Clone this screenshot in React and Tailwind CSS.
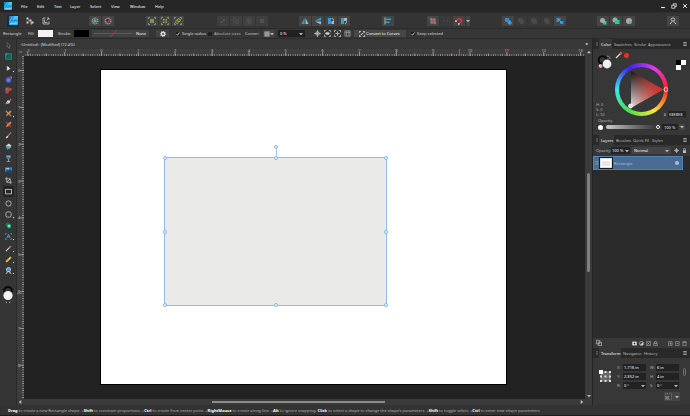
import { useState } from "react";

const MENUS = [
  ["File", "w-4"],
  ["Edit", "w-[17px]"],
  ["Text", "w-4"],
  ["Layer", "w-5"],
  ["Select", "w-[21px]"],
  ["View", "w-[19px]"],
  ["Window", "w-[25px]"],
  ["Help", "w-4"],
];

const UNIT = 36.85;

function Icon({ children, size = "size-2" }) {
  return (
    <svg viewBox="0 0 16 16" fill="none" aria-hidden="true" className={`${size} shrink-0`}>
      {children}
    </svg>
  );
}

function Logo({ size }) {
  return (
    <Icon size={size}>
      <rect width="16" height="16" rx="1.500" fill="#2fb4f7" />
      <path d="M0 0h6L0 9z" fill="#1583cf" />
      <path d="M9 0h7v5L5 8z" fill="#4cc6ff" />
      <path d="M1 13L9 1M4 8h12M7 12L12 5" stroke="#1371b5" strokeWidth="1" />
      <path d="M2 13h12" stroke="#a5e6ff" strokeWidth="1.400" />
    </Icon>
  );
}

function Arrow({ up, right }) {
  return (
    <svg viewBox="0 0 6 6" aria-hidden="true" className="size-1 shrink-0" fill="#bbb">
      <path d={up ? "M0 5h6L3 1z" : right ? "M1 0v6l4-3z" : "M0 1.5h6L3 5z"} />
    </svg>
  );
}

/* ---------- toolbar ---------- */

const BOOL_OFF = <path d="M3 3h7v7H3zM6 6h7v7H6z" fill="#4a4a4a" stroke="#525252" />;

const GROUPS = [
  {
    ml: "ml-[37px]",
    items: [
      ["Defaults", <><circle cx="8" cy="8" r="5.500" stroke="#999" strokeWidth="3" strokeDasharray="2.500 1.200" /><circle cx="8" cy="8" r="3.500" fill="#2a8f72" /><path d="M5 8h6M8 5v6" stroke="#b5d8cc" /></>],
      ["Revert defaults", <><circle cx="8" cy="8" r="5.500" stroke="#999" strokeWidth="3" strokeDasharray="2.500 1.200" /><circle cx="8" cy="8" r="4" fill="#423030" /><path d="M5 8l2.500 3L12 4" stroke="#dc3f3f" strokeWidth="2" /></>],
    ],
  },
  {
    ml: "ml-8",
    items: [
      ["Group", <><path d="M1 4V1h3M12 1h3v3M15 12v3h-3M4 15H1v-3" stroke="#a0a0a0" strokeWidth="1.500" /><rect x="4" y="4" width="8" height="8" fill="#6e9a4a" /></>],
      ["Ungroup", <><path d="M1 4V1h3M12 1h3v3M15 12v3h-3M4 15H1v-3" stroke="#a0a0a0" strokeWidth="1.500" /><path d="M4 4h3v3H4zM9 4h3v3H9zM4 9h3v3H4zM9 9h3v3H9z" fill="#a0a84a" /></>],
      ["Edit group", <><path d="M1 4V1h3M15 12v3h-3M4 15H1v-3M12 1h3v3" stroke="#a0a0a0" strokeWidth="1.500" /><circle cx="9.500" cy="6.500" r="3" stroke="#a6b443" strokeWidth="2" /><circle cx="6" cy="10" r="3" stroke="#7f9b3e" strokeWidth="2" /></>],
    ],
  },
  {
    ml: "ml-[33px]",
    dim: true,
    items: [
      ["Move back", <path d="M4 12l8-8M4 8l4 4M8 4l4 4" stroke="#525252" strokeWidth="2" />],
      ["Back one", <path d="M3 3h7v7H3zM7 7h6v6H7z" stroke="#4f4f4f" strokeWidth="1.500" />],
      ["Forward one", BOOL_OFF],
      ["Move front", <path d="M4 4h8v8H4z" fill="#505050" />],
    ],
  },
  {
    ml: "ml-[31px]",
    items: [
      ["Flip horizontal", <><path d="M7 2v12H1z" fill="#2b9fe0" /><path d="M9 2v12h6z" fill="#b5b5b5" /></>],
      ["Flip vertical", <><path d="M14 1v6H2z" fill="#2b9fe0" /><path d="M2 9h12v6z" fill="#b5b5b5" /></>],
      ["Rotate left", <><path d="M2 2h6v12H2z" fill="#2b9fe0" /><path d="M9 8h5v6H9z" fill="#b5b5b5" /><path d="M9 3c3 0 4 1 4 4" stroke="#ddd" strokeWidth="1.500" /></>],
      ["Rotate right", <><path d="M2 2h12v6H2z" fill="#b5b5b5" /><path d="M2 2h6v12H2z" fill="#2b9fe0" /><path d="M10 13c3 0 3-1 3-4" stroke="#ddd" strokeWidth="1.500" /></>],
    ],
  },
  {
    ml: "ml-8",
    items: [["Alignment", <><path d="M2 1v14" stroke="#ddd" strokeWidth="1.500" /><path d="M4 3h10v3H4zM4 9h7v3H4z" fill="#2b9fe0" /></>]],
  },
  {
    ml: "ml-[33px]",
    items: [
      ["Force pixel alignment", <><rect x="3" y="3" width="10" height="10" fill="#666" /><path d="M1 4h12M4 1v12M12 4v11M4 12h11" stroke="#aaa" /><rect x="6" y="6" width="4" height="4" fill="#e84343" /></>],
      ["Move by whole pixels", <path d="M2 6h4v4H2zM9 6h4v4H9z" fill="#444" />, true],
      ["Snapping", <g transform="rotate(45 8 8)"><path d="M4 12V7a4 4 0 0 1 8 0v5" stroke="#dc3346" strokeWidth="3" /><path d="M4 11v3M12 11v3" stroke="#ddd" strokeWidth="3" /></g>],
    ],
    drop: true,
  },
  {
    ml: "ml-8",
    items: [
      ["Add", <><path d="M2 2h8v4h3v7H7v-3H2z" fill="#2b8fd8" /><circle cx="12" cy="12" r="2.500" stroke="#72c2ff" strokeWidth="1.500" /></>],
      ["Subtract", BOOL_OFF, true],
      ["Intersect", BOOL_OFF, true],
      ["Xor", BOOL_OFF, true],
      ["Divide", <><path d="M1 2h8v5H6v3H1z" fill="#2b8fd8" /><path d="M8 8h7v6H8z" fill="#2b8fd8" /><path d="M4 4l8 8" stroke="#8bd0ff" /></>],
    ],
  },
  {
    ml: "ml-[31px]",
    items: [
      ["Insert behind", <><path d="M8 8h7v7H8z" fill="#20cfa0" /><circle cx="7" cy="7" r="5" fill="#a9a9a9" /></>],
      ["Insert on top", <><circle cx="6" cy="6" r="5" fill="#a9a9a9" /><path d="M6 6h9v8H6z" fill="#20cfa0" /></>],
      ["Insert inside", <><circle cx="8" cy="8" r="6" fill="#a9a9a9" /><path d="M8 8h6c0 4-3 6-6 6z" fill="#20cfa0" /></>],
    ],
  },
  {
    ml: "ml-8",
    items: [["Account", <><circle cx="8" cy="5" r="3.300" stroke="#ccc" strokeWidth="1.800" /><path d="M2 14l4-5M14 14l-4-5" stroke="#ccc" strokeWidth="2" /></>]],
  },
];

function ToolbarGroup({ group }) {
  return (
    <div className={`flex gap-px ${group.ml}`}>
      {group.items.map(([label, art, dim]) => (
        <button
          key={label}
          aria-label={label}
          className={`flex h-2.5 w-3 items-center justify-center ${dim ? "bg-[#393939]" : group.dim ? "bg-[#3f3f3f]" : "bg-[#454545]"}`}
        >
          <Icon>{art}</Icon>
        </button>
      ))}
      {group.drop && (
        <button aria-label="Snapping options" className="flex h-2.5 w-1 items-center justify-center bg-[#454545]">
          <Arrow />
        </button>
      )}
    </div>
  );
}

/* ---------- context bar ---------- */

function Check({ label, checked, className }) {
  const [on, setOn] = useState(checked);
  return (
    <label className={`relative flex items-center gap-0.5 whitespace-nowrap ${className}`}>
      <input
        type="checkbox"
        checked={on}
        onChange={() => setOn(!on)}
        className="size-1 shrink-0 appearance-none bg-[#202020]"
      />
      {on && (
        <svg viewBox="0 0 4 4" aria-hidden="true" className="pointer-events-none absolute left-0 size-1">
          <path d="M.5 2l1 1.300L3.500.5" fill="none" stroke="#ddd" strokeWidth=".8" />
        </svg>
      )}
      {label}
    </label>
  );
}

const CORNER_ICONS = [
  ["Show origin", <><circle cx="8" cy="8" r="4" stroke="#ccc" strokeWidth="2" /><path d="M8 0v16M0 8h16" stroke="#ccc" strokeWidth="1.500" /></>],
  ["Hide selection", <><path d="M1 5V1h4M11 1h4v4M15 11v4h-4M5 15H1v-4" stroke="#aaa" strokeWidth="2" /><path d="M2 8c3-4 9-4 12 0-3 4-9 4-12 0z" fill="#ccc" /></>],
  ["Transform origin", <><path d="M1 5V1h4M11 1h4v4M15 11v4h-4M5 15H1v-4M8 3v10M3 8h10" stroke="#bbb" strokeWidth="2" /></>],
  ["Cycle box", <><path d="M2 2h12v12H2zM2 6h12M6 2v12M11 2v12" stroke="#aaa" strokeWidth="1.500" /></>],
];

function ContextBar() {
  return (
    <div className="flex h-[11px] items-center overflow-hidden border-y border-[#2c2c2c] bg-[#363636] pl-[3px]">
      <span className="w-[25px]">Rectangle</span>
      <span className="w-2.5">Fill:</span>
      <button aria-label="Fill colour" className="h-[7px] w-[15px] bg-[#f2f2f2]" />
      <span className="ml-[5px] w-4">Stroke:</span>
      <button aria-label="Stroke colour" className="h-[7px] w-[15px] bg-black" />
      <button className="ml-[3px] flex h-[7px] w-[57px] items-center justify-between bg-[#424242] px-0.5">
        <svg viewBox="0 0 38 7" aria-hidden="true" className="h-[7px] w-[38px]" fill="none">
          <path d="M0 3.500h38" stroke="#666" strokeWidth=".7" />
          <path d="M16 7l7-7" stroke="#c33" strokeWidth=".8" />
        </svg>
        <span className="w-3 text-white">None</span>
      </button>
      <button aria-label="Stroke settings" className="ml-[7px] flex h-[7px] w-[13px] items-center justify-center bg-[#444]">
        <Icon size="size-1.5">
          <circle cx="8" cy="8" r="4.500" stroke="#ddd" strokeWidth="4" />
          <circle cx="8" cy="8" r="7" stroke="#ddd" strokeWidth="2" strokeDasharray="2.700 2.700" />
        </Icon>
      </button>
      <Check label="Single radius" checked className="ml-[7px] w-8" />
      <Check label="Absolute sizes" checked={false} className="w-[37px] text-[#b5b5b5]" />
      <span className="w-[18px]">Corner:</span>
      <button aria-label="Corner type" className="flex h-[7px] w-3 items-center justify-between bg-[#424242] px-px">
        <Icon size="size-1.5"><rect x="1" y="1" width="14" height="14" fill="#999" /></Icon>
        <Arrow />
      </button>
      <div className="ml-[3px] flex h-[7px] w-[27px] items-center bg-[#212121] px-0.5 text-white">
        <input aria-label="Corner radius" defaultValue="0 %" className="w-0 flex-1 bg-transparent" />
        <Arrow />
      </div>
      <div className="ml-2 flex gap-px">
        {CORNER_ICONS.map(([label, art]) => (
          <button key={label} aria-label={label} className="flex h-[7px] w-[9px] items-center justify-center">
            <Icon size="size-[7px]">{art}</Icon>
          </button>
        ))}
      </div>
      <button className="ml-0.5 flex h-[7px] w-[52px] items-center gap-px bg-[#474747] pl-[5px] text-white">
        <Icon size="size-1.5">
          <path d="M1 5V1h4M11 1h4v4M15 11v4h-4M5 15H1v-4M4 11l8-6" stroke="#eee" strokeWidth="2" />
        </Icon>
        <span className="whitespace-nowrap">Convert to Curves</span>
      </button>
      <Check label="Keep selected" checked className="ml-[5px]" />
    </div>
  );
}

/* ---------- tools ---------- */

const TOOLS = [
  ["Move", <path d="M5 1l7 8H9l2 5-2 1-2-5-2 2z" stroke="#999" fill="#222" />],
  ["Artboard", <><rect x="2" y="2" width="12" height="12" stroke="#1a9486" strokeWidth="2.500" /><rect x="5" y="5" width="7" height="7" fill="#2a5d56" /><path d="M0 4h3M4 0v3" stroke="#4fc" /></>],
  ["Node", <path d="M4 1v13l9-6z" fill="#eee" stroke="#222" />, true],
  ["Contour", <><circle cx="8" cy="9" r="6.500" fill="#4b59c9" /><circle cx="8" cy="9" r="3.500" fill="#7480e8" /><path d="M11 2h4v4" stroke="#aaa" strokeWidth="1.500" /></>],
  ["Corner", <><path d="M1 15C1 6 6 2 15 2v6C10 8 8 10 8 15z" fill="#c93c3c" /><path d="M1 1h9L1 11z" fill="#777" /></>],
  ["Pen", <><path d="M1 14l4-8 4-1 3 3-2 4z" fill="#ddd" /><path d="M9 5l3-4 3 3-3 4z" fill="#d6523f" /><path d="M2 14l5-5" stroke="#333" /></>],
  ["Pencil", <><path d="M2 2l5 5M10 10l4 4" stroke="#63a6d6" strokeWidth="3" /><path d="M2 14l2-5 8-8 3 3-8 8z" fill="#f08436" /></>, true],
  ["Vector brush", <><path d="M2 2l12 12" stroke="#bd3c32" strokeWidth="3" /><path d="M2 14l2-5 8-8 3 3-8 8z" fill="#ee8b3c" /></>],
  ["Paint brush", <><path d="M7 9l7-8" stroke="#c27858" strokeWidth="2.500" /><path d="M2 15c0-5 3-7 5-6s0 5-5 6z" fill="#e2d4c8" /></>],
  ["Fill", <><path d="M2 6l7-5 6 5-7 6z" fill="#ddd" /><path d="M1 8l7-2 4 5-6 5z" fill="#419cc5" /><path d="M9 6l5 3-4 4z" fill="#d9a264" /></>],
  ["Transparency", <><path d="M3 1h10c0 6-2 8-5 8S3 7 3 1z" fill="#8fb0c4" /><path d="M4 4h8c0 3-2 5-4 5S4 7 4 4z" fill="#3a7ba8" /><path d="M8 9v5M4 15h8" stroke="#ccc" strokeWidth="1.500" /></>],
  ["Place image", <><rect y="3" width="16" height="11" fill="#3d82b7" /><path d="M0 14l5-5 3 2 3-3 5 3v3z" fill="#1c4268" /><path d="M3 6h6" stroke="#c9e4f5" strokeWidth="2" /></>],
  ["Vector crop", <path d="M4 0v12h12M0 4h12v12M4 12l8-8" stroke="#ccc" strokeWidth="1.600" />],
  ["Rectangle", <rect x="1.500" y="3" width="13" height="10.500" stroke="#eee" strokeWidth="1.600" />],
  ["Ellipse", <circle cx="8" cy="8" r="6" stroke="#ccc" strokeWidth="1.800" />],
  ["Rounded rectangle", <rect x="2" y="2" width="12" height="12" rx="4" stroke="#ccc" strokeWidth="1.800" />, true],
  ["Shape builder", <><circle cx="6" cy="6" r="5" fill="#1c705a" /><rect x="5" y="5" width="9" height="9" rx="3" fill="#20ae7d" /><rect x="7" y="7" width="4" height="4" fill="#8bf3bb" /></>],
  ["Artistic text", <><path d="M1 4V1h3M12 1h3v3M15 12v3h-3M4 15H1v-3" stroke="#3a8fca" strokeWidth="2" /><path d="M4 12l4-9 4 9M6 9h4" stroke="#aaa" strokeWidth="1.500" /></>, true],
  ["Colour picker", <><path d="M2 14l8-8" stroke="#ddd" strokeWidth="2.500" /><path d="M8 5l4-4 3 3-4 4z" fill="#d0674b" /></>, true],
  ["Measure", <><path d="M1 12L12 1l3 3L4 15z" fill="#e9ce3d" /><path d="M4 9l2 2M7 6l2 2M10 3l2 2" stroke="#89731c" /></>, true],
  ["Zoom", <><path d="M9 10l5 5" stroke="#bbb" strokeWidth="2.500" /><circle cx="8" cy="6" r="5.500" fill="#ddd" /><circle cx="8" cy="6" r="3.800" fill="#3f97d8" /><path d="M2 15l4-3" stroke="#d9b155" strokeWidth="2.500" /></>, true],
];

function ToolStrip() {
  const [tool, setTool] = useState("Rectangle");
  return (
    <aside className="flex w-[17px] shrink-0 flex-col items-center border-r border-[#2a2a2a] bg-[#353535] pt-px">
      <div className="flex h-[236px] flex-col justify-between">
        {TOOLS.map(([label, art, more]) => (
          <button
            key={label}
            aria-label={label}
            onClick={() => setTool(label)}
            className={`relative flex h-[11px] w-[11px] items-center justify-center ${tool === label ? "bg-[#242424]" : ""}`}
          >
            <Icon size="size-[7px]">{art}</Icon>
            {more && <span className="absolute bottom-0.5 right-0 size-px bg-white" />}
          </button>
        ))}
      </div>
      <button aria-label="Stroke and fill" className="mt-2.5">
        <svg viewBox="0 0 12 18" aria-hidden="true" className="h-[18px] w-3" fill="none">
          <circle cx="6" cy="5" r="4" stroke="#0a0a0a" strokeWidth="1.800" />
          <circle cx="6" cy="9.500" r="4.600" fill="#f4f4f4" />
          <path d="M4 15.500v1h1M8 15.500v1H7" stroke="#aaa" strokeWidth=".7" />
        </svg>
      </button>
    </aside>
  );
}

/* ---------- canvas ---------- */

const UNITS_X = Array.from({ length: 16 }, (_, i) => i - 2);
const UNITS_Y = Array.from({ length: 9 }, (_, i) => i);

function RulerX() {
  return (
    <svg aria-label="Horizontal ruler" className="h-[7px] w-0 flex-1 bg-[#3d3d3d] text-[4px]">
      <defs>
        <pattern id="minorX" x="77.500" width={UNIT / 16} height="7" patternUnits="userSpaceOnUse">
          <path d="M0 5v2" stroke="#b5b5b5" />
        </pattern>
      </defs>
      <rect width="100%" height="7" fill="url(#minorX)" />
      {UNITS_X.map((n) => (
        <g key={n}>
          <path d={`M${77.5 + n * UNIT} 3v4M${77.5 + (n + 0.5) * UNIT} 4.500v3`} stroke="#aaa" strokeWidth=".8" />
          <text x={77.5 + n * UNIT} y="3" textAnchor="middle" fill="#bbb">{n}</text>
        </g>
      ))}
      <path d="M435.500 0v7" stroke="#3480aa" />
    </svg>
  );
}

function RulerY() {
  return (
    <svg aria-label="Vertical ruler" className="h-auto w-[7px] shrink-0 bg-[#3d3d3d] text-[4px]">
      <defs>
        <pattern id="minorY" y="14" width="7" height={UNIT / 16} patternUnits="userSpaceOnUse">
          <path d="M5 0h2" stroke="#b5b5b5" />
        </pattern>
      </defs>
      <rect width="7" height="100%" fill="url(#minorY)" />
      {UNITS_Y.map((n) => (
        <g key={n}>
          <path d={`M3 ${14.5 + n * UNIT}h4`} stroke="#aaa" strokeWidth=".8" />
          <text x="1" y={16 + n * UNIT} fill="#bbb">{n}</text>
        </g>
      ))}
      <path d="M0 237.500h7" stroke="#3480aa" />
    </svg>
  );
}

const HANDLES = [
  "left-0 top-0", "left-1/2 top-0", "left-full top-0",
  "left-0 top-1/2", "left-full top-1/2",
  "left-0 top-full", "left-1/2 top-full", "left-full top-full",
];

function Artboard() {
  return (
    <div className="relative ml-[77px] mt-3.5 h-[314px] w-[405px] bg-white outline outline-black">
      <div className="absolute left-16 top-[88px] h-[147px] w-[221px] bg-[#eaeae8] outline outline-[#8fbcf0]">
        <span className="absolute -top-2.5 left-1/2 h-2.5 w-px bg-[#a5cbf5]" />
        <span className="absolute -top-[11px] left-1/2 size-1 -translate-x-1/2 -translate-y-1/2 rounded-full border border-[#7fb2ee] bg-white" />
        {HANDLES.map((pos) => (
          <span key={pos} className={`absolute size-1 -translate-x-1/2 -translate-y-1/2 rounded-full border border-[#7fb2ee] bg-white ${pos}`} />
        ))}
      </div>
    </div>
  );
}

function Document() {
  return (
    <main className="flex min-w-0 flex-1 flex-col bg-[#3a3a3a]">
      <div className="flex h-2.5 items-center justify-between bg-[#373737] pl-[3px] pr-1">
        <span className="text-[#ddd]">&lt;Untitled&gt; [Modified] (72.4%)</span>
        <button aria-label="Close document" className="text-[5px] text-white">×</button>
      </div>
      <div className="flex flex-1">
        <div className="flex min-w-0 flex-1 flex-col">
          <div className="flex h-[7px] bg-[#3d3d3d]">
            <span className="w-[7px] text-center text-[#999]">in</span>
            <RulerX />
          </div>
          <div className="flex flex-1">
            <RulerY />
            <div className="min-w-0 flex-1 overflow-hidden bg-[#222]">
              <Artboard />
            </div>
          </div>
          <div className="flex h-1.5 items-center justify-between px-px">
            <span className="rotate-180"><Arrow right /></span>
            <div className="ml-[190px] mr-auto h-0.5 w-[173px] bg-[#8c8c8c]" />
            <Arrow right />
          </div>
        </div>
        <div className="flex w-[7px] flex-col items-center py-px">
          <Arrow up />
          <div className="mb-auto mt-[119px] h-[99px] w-[3px] rounded-full bg-[#808080]" />
          <span className="mb-1.5"><Arrow /></span>
        </div>
      </div>
    </main>
  );
}

/* ---------- studio panels ---------- */

function PanelTabs({ tabs }) {
  return (
    <div className="flex h-2.5 items-center bg-[#292929] pl-0.5">
      <span className="flex w-1"><Icon size="size-1"><path d="M8 1v14" stroke="#999" strokeWidth="4" strokeDasharray="4 2" /></Icon></span>
      {tabs.map(([label, width], i) => (
        <button
          key={label}
          className={`h-2.5 shrink-0 whitespace-nowrap pl-0.5 text-left ${width} ${i === 0 ? "bg-[#383838] text-white" : "text-[#bbb]"}`}
        >
          {label}
        </button>
      ))}
      <button aria-label="Panel options" className="ml-auto mr-[3px]">
        <Icon size="size-1"><path d="M1 2h14M1 8h14M1 14h14" stroke="#bbb" strokeWidth="3" /></Icon>
      </button>
    </div>
  );
}

function ColorPanel() {
  return (
    <section>
      <PanelTabs tabs={[["Color", "w-[13px]"], ["Swatches", "w-5"], ["Stroke", "w-[14px]"], ["Appearance", "w-6"]]} />
      <div className="flex h-[69px] justify-between pl-[3px] pr-1">
        <div className="flex w-[18px] flex-col justify-between pb-px pt-[5px]">
          <svg viewBox="0 0 18 17" aria-hidden="true" className="h-[17px] w-[18px]" fill="none">
            <circle cx="6.500" cy="6" r="3.800" stroke="#0b0b0b" strokeWidth="2" />
            <path d="M11 2c2 0 3 1 3 3" stroke="#aaa" strokeWidth=".7" />
            <circle cx="11" cy="10" r="4.400" fill="#f1f1f1" />
            <circle cx="4.500" cy="12" r="1.800" fill="#fff" />
            <path d="M3 13.500l3-3" stroke="#e33" />
          </svg>
          <div className="leading-[5px] text-[#aaa]">
            <p>H: 0</p>
            <p>S: 0</p>
            <p>L: 92</p>
          </div>
        </div>
        <div className="flex w-[53px] shrink-0 flex-col">
          <div className="flex h-3.5 items-center gap-px pb-0.5">
            <button aria-label="Pick colour"><Icon><path d="M2 14l8-8" stroke="#ddd" strokeWidth="2.500" /><path d="M8 5l4-4 3 3-4 4z" fill="#d0674b" /></Icon></button>
            <button aria-label="Picked colour" className="size-[5px] rounded-full bg-[#e5331f]" />
          </div>
          <div className="relative size-[53px] rounded-full bg-[conic-gradient(from_90deg,#f22,#f5e83a,#4fe045,#3fe0f0,#3a22f5,#e03af0,#f22)]">
            <div className="absolute inset-1 rounded-full bg-[#373737]" />
            <svg viewBox="0 0 53 53" aria-label="Colour triangle" className="absolute inset-0 size-full">
              <defs>
                <linearGradient id="tone" x1="0" x2="0" y1="0" y2="1">
                  <stop stopColor="#111" />
                  <stop offset="1" stopColor="#e8e8e8" />
                </linearGradient>
                <linearGradient id="hue">
                  <stop stopColor="#e2271c" stopOpacity="0" />
                  <stop offset="1" stopColor="#e2271c" />
                </linearGradient>
              </defs>
              <path d="M16 8v37l32-18.500z" fill="url(#tone)" />
              <path d="M16 8v37l32-18.500z" fill="url(#hue)" />
              <circle cx="51" cy="26.500" r="2" fill="none" stroke="#fff" strokeWidth=".8" />
              <circle cx="15.500" cy="43" r="2" fill="#ddd" stroke="#fff" strokeWidth=".8" />
            </svg>
          </div>
        </div>
        <div className="flex w-[17px] flex-col items-end justify-between pb-px pt-[11px]">
          <div className="grid size-2.5 grid-cols-2">
            <span className="bg-black" />
            <span className="bg-white" />
            <span className="bg-white" />
            <span className="bg-[#373737]" />
          </div>
          <label className="flex items-center gap-0.5 whitespace-nowrap">
            #
            <input defaultValue="E8E8E8" className="h-1.5 w-[18px] bg-[#232323] pl-px text-[#ddd]" />
          </label>
        </div>
      </div>
      <div className="h-[17px] px-[5px]">
        <label htmlFor="fill-opacity" className="block h-[5px] text-[#bbb]">Opacity</label>
        <div className="flex h-2 items-center">
          <span className="size-[5px] rounded-full bg-white" />
          <div className="relative ml-[3px] h-1 flex-1 rounded-full bg-linear-to-r from-[#ccc] to-[#333]">
            <input id="fill-opacity" type="range" defaultValue="100" className="absolute inset-0 w-full appearance-none opacity-0" />
            <span className="absolute -right-0.5 top-0 size-1 rounded-full border border-white bg-[#222]" />
          </div>
          <input aria-label="Opacity value" defaultValue="100 %" className="ml-1 h-1.5 w-4 bg-[#232323] pl-0.5 text-[#eee]" />
          <button aria-label="Opacity options" className="ml-px flex size-1.5 items-center justify-center bg-[#454545]"><Arrow /></button>
        </div>
      </div>
    </section>
  );
}

const GEAR = <><circle cx="8" cy="8" r="4" stroke="#bbb" strokeWidth="3" /><path d="M8 0v16M0 8h16" stroke="#bbb" strokeWidth="2" /></>;

function LayersPanel() {
  return (
    <section className="flex flex-1 flex-col bg-[#2b2b2b]">
      <PanelTabs tabs={[["Layers", "w-[15px]"], ["Brushes", "w-[17px]"], ["Quick FX", "w-[19px]"], ["Styles", "w-4"]]} />
      <div className="flex h-[11px] items-center bg-[#363636] pl-[3px] pr-[3px]">
        <label htmlFor="layer-opacity" className="w-[15px] text-[#bbb]">Opacity:</label>
        <div className="flex h-[7px] w-[19px] items-center bg-[#242424] px-px text-white">
          <input id="layer-opacity" defaultValue="100 %" className="w-0 flex-1 bg-transparent" />
          <Arrow />
        </div>
        <div className="relative ml-0.5 flex flex-1 items-center">
          <select aria-label="Blend mode" className="h-[7px] w-full appearance-none bg-[#444] px-0.5 text-white">
            <option>Normal</option>
          </select>
          <span className="pointer-events-none absolute right-0.5 flex"><Arrow /></span>
        </div>
        <button aria-label="Layer settings" className="ml-[3px]"><Icon size="size-[5px]">{GEAR}</Icon></button>
        <button aria-label="Lock" className="ml-[3px]">
          <Icon size="size-[5px]"><path d="M3 7h10v9H3z" fill="#bbb" /><path d="M5 7V2h6v5" stroke="#bbb" strokeWidth="2" /></Icon>
        </button>
      </div>
      <div className="mr-[7px] flex h-3.5 items-center bg-[#496b94] pr-1 outline -outline-offset-1 outline-[#5680b0]">
        <span className="flex w-[7px] justify-center">
          <Icon size="size-1"><path d="M4 1v14M11 1v14" stroke="#c5d3e3" strokeWidth="3" strokeDasharray="3 3" /></Icon>
        </span>
        <div className="flex h-2.5 w-3 items-center justify-center border border-[#ddd] bg-white ring-1 ring-[#151c25]">
          <span className="h-[5px] w-2 bg-[#e8e8e6]" />
        </div>
        <span className="ml-0.5 flex-1 text-[#a9c0da]">Rectangle</span>
        <span className="size-1 rounded-full bg-[#a6bdd6]" />
      </div>
      <div className="mt-auto flex h-2.5 items-center gap-0.5 bg-[#383838] px-[3px]">
        <button aria-label="Edit all layers" className="mr-auto"><Icon size="size-1.5"><path d="M1 1h9v9H1zM6 6h9v9H6z" stroke="#bbb" strokeWidth="2" /></Icon></button>
        <button aria-label="Mask"><Icon size="size-[5px]"><path d="M1 2h14v12H1z" fill="#eee" /><circle cx="8" cy="8" r="3" fill="#333" /></Icon></button>
        <button aria-label="Adjustment"><Icon size="size-[5px]"><circle cx="8" cy="8" r="6.500" stroke="#ccc" strokeWidth="2" /><path d="M13 3v10H3z" fill="#ccc" /></Icon></button>
        <button aria-label="Effects"><Icon size="size-[5px]"><path d="M1 2h14v12H1zM4 12l8-8M4 4l8 8" stroke="#aaa" strokeWidth="2" /></Icon></button>
        <button aria-label="Live filter" className="mr-2"><Icon size="size-[5px]"><path d="M2 8h12v6H2zM5 8V2h6v6" stroke="#aaa" strokeWidth="2" /></Icon></button>
        <button aria-label="Add pixel layer"><Icon size="size-[5px]"><path d="M2 2h11v13H2zM8 5v7M5 8h6" stroke="#aaa" strokeWidth="2" /></Icon></button>
        <button aria-label="Add layer"><Icon size="size-[5px]"><path d="M2 2h11v13H2zM5 8h6" stroke="#aaa" strokeWidth="2" /></Icon></button>
        <button aria-label="Delete layer"><Icon size="size-[5px]"><path d="M3 4h10v11H3zM1 3h14M6 1h4" stroke="#aaa" strokeWidth="2" /></Icon></button>
      </div>
    </section>
  );
}

function Field({ label, value, drop }) {
  return (
    <label className="flex items-center">
      <span className="w-1.5 text-[#aaa]">{label}</span>
      <span className="flex h-[7px] w-[23px] items-center bg-[#222] px-px">
        <input defaultValue={value} className="w-0 flex-1 bg-transparent text-white" />
        {drop && <Arrow />}
      </span>
    </label>
  );
}

function TransformPanel() {
  return (
    <section className="h-[57px] bg-[#373737]">
      <PanelTabs tabs={[["Transform", "w-[22px]"], ["Navigator", "w-[21px]"], ["History", "w-4"]]} />
      <div className="flex pl-1.5 pr-1 pt-1.5">
        <svg viewBox="0 0 13 13" aria-label="Anchor point" className="mt-1.5 size-[13px]">
          <path d="M2 2h9v9H2z" fill="#666" stroke="#aaa" strokeWidth=".6" />
          <path d="M0 0h4v4H0z" fill="#fff" />
          <path d="M5.500 1h2v2h-2zM10 1h2v2h-2zM1 5.500h2v2H1zM5.500 5.500h2v2h-2zM10 5.500h2v2h-2zM1 10h2v2H1zM5.500 10h2v2h-2zM10 10h2v2h-2z" fill="#ddd" />
        </svg>
        <div className="ml-[5px] grid grid-cols-[33px_29px] gap-y-0.5">
          <Field label="X:" value="1.716 in" />
          <Field label="W:" value="6 in" />
          <Field label="Y:" value="2.352 in" />
          <Field label="H:" value="4 in" />
          <Field label="R:" value="0 °" drop />
          <Field label="S:" value="0 °" drop />
        </div>
        <button aria-label="Lock aspect ratio" className="ml-auto mt-1 h-2 w-[3px] rounded-xs border border-[#777]" />
      </div>
      <button aria-label="Scale options" className="ml-auto mr-2.5 mt-[3px] flex h-[9px] w-4 items-center justify-around bg-[#454545]">
        <Icon size="size-[7px]"><path d="M1 1h14v14H1z" stroke="#888" strokeDasharray="2 2" strokeWidth="1.500" /><path d="M1 7h8v8H1z" fill="#777" /></Icon>
        <Arrow />
      </button>
    </section>
  );
}

/* ---------- status bar ---------- */

function Key({ children }) {
  return <b className="font-bold text-white">{children}</b>;
}

function StatusBar() {
  return (
    <footer className="flex h-[11px] items-center overflow-hidden whitespace-nowrap border-b border-[#1c1c1c] bg-[#333] pl-2 text-[#b5b5b5]">
      <p>
        <Key>Drag</Key> to create a new Rectangle shape. +<Key>Shift</Key> to constrain proportions. +<Key>Ctrl</Key> to
        create from center point. +<Key>RightMouse</Key> to create along line. +<Key>Alt</Key> to ignore
        snapping. <Key>Click</Key> to select a shape to change the shape's parameters. +<Key>Shift</Key> to toggle
        select. +<Key>Ctrl</Key> to enter new shape parameters
      </p>
    </footer>
  );
}

export default function App() {
  return (
    <div className="flex min-h-screen flex-col bg-[#333] font-['Noto_Sans','Open_Sans',sans-serif] text-[4px] leading-[5px] text-[#ddd]">
      <header className="flex h-3 items-center bg-[#262626] pl-1 pr-0.5">
        <Logo size="size-2" />
        <nav className="ml-[9px] flex">
          {MENUS.map(([label, width]) => (
            <button key={label} className={`${width} text-left text-white`}>{label}</button>
          ))}
        </nav>
        <div className="ml-auto flex gap-[5px]">
          <button aria-label="Minimise"><Icon size="size-1.5"><path d="M3 12h10" stroke="#eee" strokeWidth="3" /></Icon></button>
          <button aria-label="Restore"><Icon size="size-1.5"><path d="M2 6h8v8H2zM6 6V2h8v8h-4" stroke="#eee" strokeWidth="2" /></Icon></button>
          <button aria-label="Close"><Icon size="size-1.5"><path d="M3 3l10 10M13 3L3 13" stroke="#eee" strokeWidth="2.500" /></Icon></button>
        </div>
      </header>
      <div className="flex h-4 items-center border-t border-[#2e2e2e] bg-[#343434] pl-[7px]">
        <button aria-label="Designer persona" className="flex size-3 items-center justify-center bg-[#202a33]"><Logo size="size-[9px]" /></button>
        <button aria-label="Pixel persona" className="ml-[5px] flex size-3 items-center justify-center">
          <Icon><path d="M1 1h4v4H1zM7 5h4v4H7zM1 9h4v4H1zM11 9h4v4h-4z" fill="#d6d6d6" /><path d="M5 5h2v4H5zM9 10h3v5H9z" fill="#d99b8e" /></Icon>
        </button>
        <button aria-label="Export persona" className="ml-1 flex size-3 items-center justify-center">
          <Icon><path d="M7 2H2v12h12V9" stroke="#bbb" strokeWidth="1.800" /><path d="M5 5v6h6M9 7l5-5M10 2h4v4" stroke="#9fc1d3" strokeWidth="1.800" /></Icon>
        </button>
        {GROUPS.map((group) => (
          <ToolbarGroup key={group.items[0][0]} group={group} />
        ))}
      </div>
      <ContextBar />
      <div className="flex flex-1">
        <ToolStrip />
        <Document />
        <aside className="flex w-[98px] shrink-0 flex-col border-l border-[#242424] bg-[#373737]">
          <ColorPanel />
          <LayersPanel />
          <TransformPanel />
        </aside>
      </div>
      <StatusBar />
    </div>
  );
}
